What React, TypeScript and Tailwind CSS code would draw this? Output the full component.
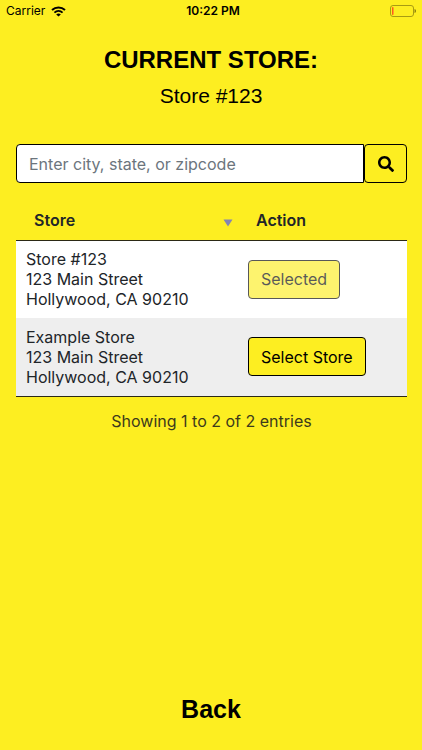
import { FaSearch } from "react-icons/fa";

type Store = { name: string; street: string; city: string; selected: boolean };

const stores: Store[] = [
  { name: "Store #123", street: "123 Main Street", city: "Hollywood, CA 90210", selected: true },
  { name: "Example Store", street: "123 Main Street", city: "Hollywood, CA 90210", selected: false },
];

function StatusBar() {
  return (
    <div className="grid h-[22px] grid-cols-[1fr_auto_1fr] items-center px-[6px] text-[12px] leading-4 text-black">
      <div className="flex items-center gap-[6px]">
        <span>Carrier</span>
        <svg width="15" height="11" viewBox="0 0 15 11" fill="none" aria-label="Wi-Fi">
          <path d="M1 4C4.7 .5 10.3 .5 14 4" stroke="#000" strokeWidth="2" />
          <path d="M3.4 6.6c2.4-2.2 5.8-2.2 8.2 0" stroke="#000" strokeWidth="1.8" />
          <path d="M7.5 10.6 5.2 8.4c1.3-1.2 3.3-1.2 4.6 0Z" fill="#000" />
        </svg>
      </div>
      <span className="pl-1 font-semibold">10:22 PM</span>
      <svg className="justify-self-end" width="27" height="12" viewBox="0 0 27 12" aria-label="Battery low">
        <rect x="1.5" y=".5" width="23" height="11" rx="2.5" fill="none" stroke="#a89c12" />
        <rect x="3" y="2" width="1.5" height="8" rx=".7" fill="#ff5a1f" />
        <path d="M25.5 4c2 .6 2 3.4 0 4Z" fill="#8c820f" />
      </svg>
    </div>
  );
}

export default function App() {
  return (
    <div className="flex min-h-screen flex-col bg-[#fdee21] font-['Inter','Liberation_Sans',sans-serif] text-[16px] text-[#212529]">
      <StatusBar />
      <header className="pt-[20px] text-center font-['Liberation_Sans',Arial,sans-serif] text-black">
        <h1 className="text-[24px] leading-9 font-bold">CURRENT STORE:</h1>
        <p className="text-[21px] leading-9">Store #123</p>
      </header>
      <main className="pt-[30px] pr-[15px] pl-4">
        <form className="flex h-[39px]" onSubmit={(e) => e.preventDefault()}>
          <input
            type="text"
            aria-label="Store location"
            placeholder="Enter city, state, or zipcode"
            className="min-w-0 flex-1 rounded-l border border-black bg-white px-3 placeholder:text-[#6c757d] focus:outline-none"
          />
          <button
            type="submit"
            aria-label="Search"
            className="flex w-[43px] items-center justify-center rounded border border-black text-black"
          >
            <FaSearch size={16} />
          </button>
        </form>
        <table className="mt-[18px] w-full table-fixed border-collapse text-left">
          <thead>
            <tr className="h-[39px] border-b border-[#2b2915]">
              <th className="w-[222px] pr-[5px] pl-[18px] font-semibold">
                <div className="flex items-center justify-between">
                  Store
                  <svg className="mt-[6px]" width="10" height="8" viewBox="0 0 10 8" aria-hidden="true">
                    <path d="M.5 .5h9L5 7.5Z" fill="#8484b4" />
                  </svg>
                </div>
              </th>
              <th className="px-[18px] font-semibold">Action</th>
            </tr>
          </thead>
          <tbody className="border-b border-[#2b2915]">
            {stores.map((s) => (
              <tr key={s.name} className="h-[78px] odd:bg-white even:bg-[#eeeeee]">
                <td className="px-[10px] leading-5">
                  {s.name}
                  <br />
                  {s.street}
                  <br />
                  {s.city}
                </td>
                <td className="px-[10px]">
                  <button
                    type="button"
                    disabled={s.selected}
                    className="h-[39px] rounded border border-black bg-[#fdee21] px-3 text-black disabled:opacity-65"
                  >
                    {s.selected ? "Selected" : "Select Store"}
                  </button>
                </td>
              </tr>
            ))}
          </tbody>
        </table>
        <p className="pt-[12px] text-center leading-6 text-[#3c3a1c]">Showing 1 to 2 of 2 entries</p>
      </main>
      <footer className="mt-auto pb-[23px] text-center">
        <button type="button" className="font-['Liberation_Sans',Arial,sans-serif] text-[25px] leading-9 font-bold text-black">
          Back
        </button>
      </footer>
    </div>
  );
}
